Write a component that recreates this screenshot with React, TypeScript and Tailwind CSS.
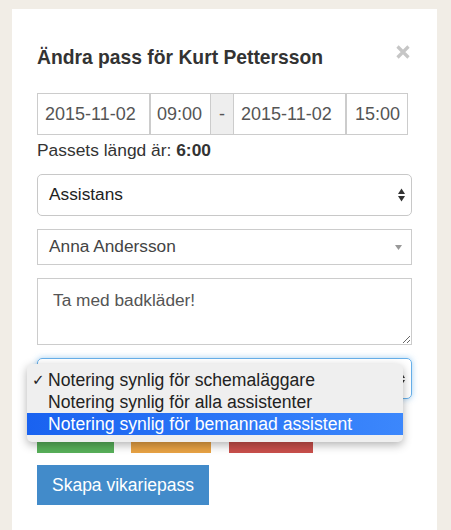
import React from "react";

function UpDown() {
  return (
    <svg width="7" height="14" viewBox="0 0 7 14" className="shrink-0">
      <path d="M0 6 L3.5 0.5 L7 6 Z" fill="#333" />
      <path d="M0 8 L3.5 13.5 L7 8 Z" fill="#333" />
    </svg>
  );
}

export default function App() {
  return (
    <div className="min-h-[530px] bg-[#f1ede6] pt-[9px] px-[12px] font-['Liberation_Sans',Arial,sans-serif]">
      <div className="bg-white w-[425px] min-h-[521px] px-[25px] pt-[38px]">
        {/* header */}
        <div className="flex items-start justify-between">
          <h2 className="text-[19.3px] leading-[21px] font-bold text-[#333]">
            Ändra pass för Kurt Pettersson
          </h2>
          <svg width="14" height="14" viewBox="0 0 14 14" className="mt-[-2px] mr-[2px]">
            <path d="M1.5 1.5 L12.5 12.5 M12.5 1.5 L1.5 12.5" stroke="#c6c6c6" strokeWidth="3.2" />
          </svg>
        </div>

        {/* date row */}
        <div className="flex h-[42px] mt-[25px] text-[18px] text-[#555]">
          <div className="w-[113px] border border-[#ccc] flex items-center pl-[7px]">2015-11-02</div>
          <div className="w-[61px] border border-[#ccc] flex items-center pl-[6px]">09:00</div>
          <div className="w-[22px] border-y border-[#ccc] bg-[#eee] flex items-center justify-center">-</div>
          <div className="w-[113px] border border-[#ccc] flex items-center pl-[7px]">2015-11-02</div>
          <div className="w-[62px] border border-[#ccc] flex items-center pl-[8px]">15:00</div>
        </div>
        <p className="mt-[5px] text-[17.4px] leading-[20px] text-[#333]">
          Passets längd är: <b>6:00</b>
        </p>

        {/* type select */}
        <div className="mt-[14px] h-[42px] rounded-[5px] border border-[#c8c8c8] flex items-center justify-between pl-[11px] pr-[6px] text-[17.3px] text-[#222]">
          <span>Assistans</span>
          <UpDown />
        </div>

        {/* assistant chooser */}
        <div className="mt-[13px] h-[36px] border border-[#ccc] flex items-center justify-between pl-[11px] pr-[9px] text-[17.3px] text-[#444]">
          <span>Anna Andersson</span>
          <svg width="7" height="5" viewBox="0 0 7 5">
            <path d="M0 0 H7 L3.5 5 Z" fill="#999" />
          </svg>
        </div>

        {/* note */}
        <textarea
          defaultValue="Ta med badkläder!"
          className="block mt-[13px] w-full h-[67px] border border-[#ccc] px-[15px] pt-[11px] text-[17.3px] leading-[20px] text-[#555] outline-none resize-y"
        />

        {/* visibility select with open menu */}
        <div className="relative mt-[13px]">
          <div className="h-[41px] rounded-[5px] border border-[#66afe9] shadow-[0_0_6px_rgba(102,175,233,0.6)] flex items-center justify-end pr-[6px]">
            <UpDown />
          </div>
          <div className="absolute left-[-10px] top-[6px] w-[376px] z-10 rounded-[5px] bg-[#efefef] pt-[5px] pb-[7px] shadow-[0_3px_10px_rgba(0,0,0,0.3)] text-[17.6px] text-[#222]">
            <div className="h-[22px] flex items-center">
              <span className="w-[21px] pl-[5px] text-[15px] font-['DejaVu_Sans',sans-serif]">✓</span>
              <span>Notering synlig för schemaläggare</span>
            </div>
            <div className="h-[22px] flex items-center pl-[21px]">Notering synlig för alla assistenter</div>
            <div className="h-[22px] flex items-center pl-[21px] bg-linear-to-r from-[#1962f0] to-[#3c87fc] text-white">
              Notering synlig för bemannad assistent
            </div>
          </div>
        </div>

        {/* action buttons (labels hidden behind the open menu) */}
        <div className="flex mt-[14px] h-[40px]">
          <div className="w-[77px] bg-[#58b05a]" />
          <div className="w-[80px] ml-[17px] bg-[#e8a244]" />
          <div className="w-[84px] ml-[18px] bg-[#c94f4b]" />
        </div>

        <button className="mt-[12px] w-[172px] h-[40px] bg-[#428bca] text-white text-[17.5px]">
          Skapa vikariepass
        </button>
      </div>
    </div>
  );
}
